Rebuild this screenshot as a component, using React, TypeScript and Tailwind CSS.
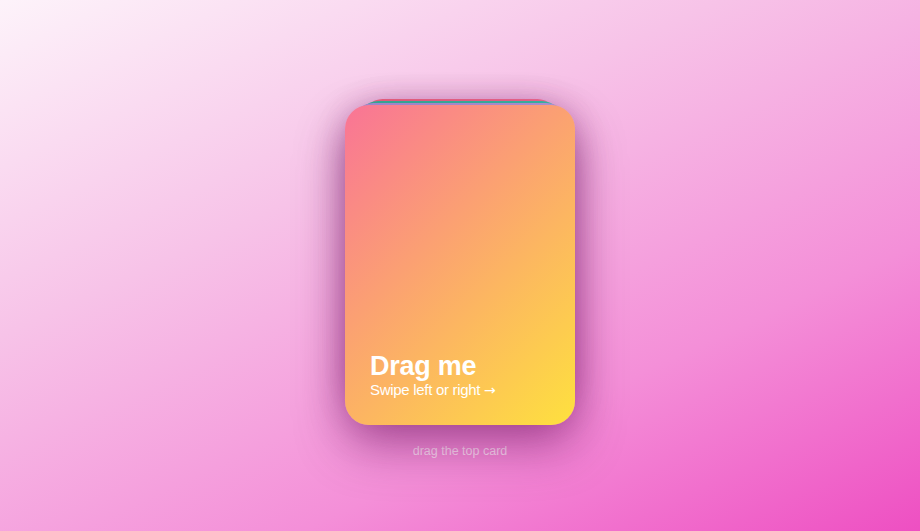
import React from "react";

const behind = [
  { cls: "bg-[linear-gradient(135deg,#f56a80,#ff7eb3)]", style: { transform: "translateY(-30px) scale(0.85)" } },
  { cls: "bg-[linear-gradient(135deg,#2fb597,#38d9c0)]", style: { transform: "translateY(-20px) scale(0.9)" } },
  { cls: "bg-[linear-gradient(135deg,#a18cd1,#c6a6e0)]", style: { transform: "translateY(-10px) scale(0.95)" } },
];

export default function App() {
  return (
    <div
      className="w-full h-screen overflow-hidden flex flex-col items-center bg-[linear-gradient(155deg,#fdf3fa_0%,#f7c3e8_35%,#f48fd8_70%,#ee4fc2_100%)]"
      style={{ fontFamily: '"Liberation Sans", Arial, sans-serif' }}
    >
      <div className="relative w-[230px] h-[320px] mt-[105px]">
        {behind.map((c, i) => (
          <div
            key={i}
            className={`absolute inset-0 rounded-[24px] shadow-[0_18px_45px_rgba(110,10,90,0.3)] ${c.cls}`}
            style={c.style}
          />
        ))}
        <div className="absolute inset-0 rounded-[24px] bg-[linear-gradient(135deg,#f97496_0%,#fee13e_100%)] shadow-[0_22px_50px_rgba(100,10,90,0.42)] flex flex-col justify-end pl-[25px] pr-6 pb-[26px] text-white">
          <div className="text-[27px] leading-[30px] font-bold tracking-[-0.01em]">Drag me</div>
          <div className="text-[15px] leading-[18px] tracking-[-0.02em]">
            Swipe left or right{" "}
            <span style={{ fontFamily: '"DejaVu Sans", sans-serif' }} className="text-[14px]">→</span>
          </div>
        </div>
      </div>
      <div className="mt-[18px] text-[12.5px] leading-[16px] text-white/75">drag the top card</div>
    </div>
  );
}
